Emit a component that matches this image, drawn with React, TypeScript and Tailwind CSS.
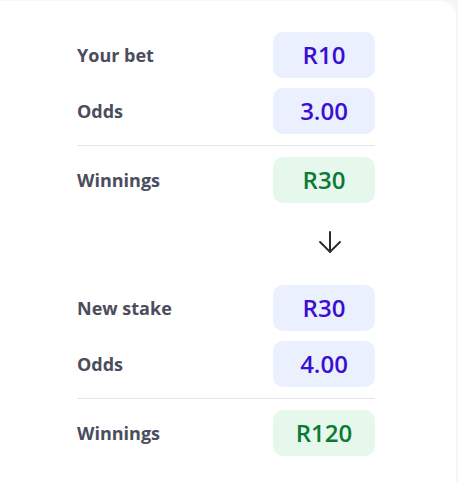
import { ArrowDown } from "lucide-react";

type Tone = "blue" | "green";

function Row({ label, value, tone = "blue" }: { label: string; value: string; tone?: Tone }) {
  return (
    <div className="flex items-center justify-between">
      <span className="text-[18px] font-bold text-[#4b4d5c]">{label}</span>
      <span
        className={`flex h-[46px] w-[102px] items-center justify-center rounded-[10px] text-[24px] font-semibold ${
          tone === "green" ? "bg-[#e6f8ec] text-[#0b7a34]" : "bg-[#ebf0ff] text-[#3a0fd2]"
        }`}
      >
        {value}
      </span>
    </div>
  );
}

export default function App() {
  return (
    <div
      className="min-h-[482px] w-[458px] bg-[#f6f7fb] pt-px pr-[2px]"
      style={{ fontFamily: '"Open Sans", "Noto Sans", sans-serif' }}
    >
      <div className="h-[481px] rounded-tr-[16px] bg-white pt-[31px] pl-[77px]">
        <div className="flex w-[298px] flex-col">
          <div className="flex flex-col gap-[10px]">
            <Row label="Your bet" value="R10" />
            <Row label="Odds" value="3.00" />
          </div>
          <div className="mt-[11px] mb-[11px] h-px bg-[#e4e5eb]" />
          <Row label="Winnings" value="R30" tone="green" />

          <div className="flex justify-end pr-[28px] pt-[22px] pb-[26px]">
            <ArrowDown className="h-[34px] w-[34px] text-[#2a2a2e]" strokeWidth={1.4} />
          </div>

          <div className="flex flex-col gap-[10px]">
            <Row label="New stake" value="R30" />
            <Row label="Odds" value="4.00" />
          </div>
          <div className="mt-[11px] mb-[11px] h-px bg-[#e4e5eb]" />
          <Row label="Winnings" value="R120" tone="green" />
        </div>
      </div>
    </div>
  );
}
